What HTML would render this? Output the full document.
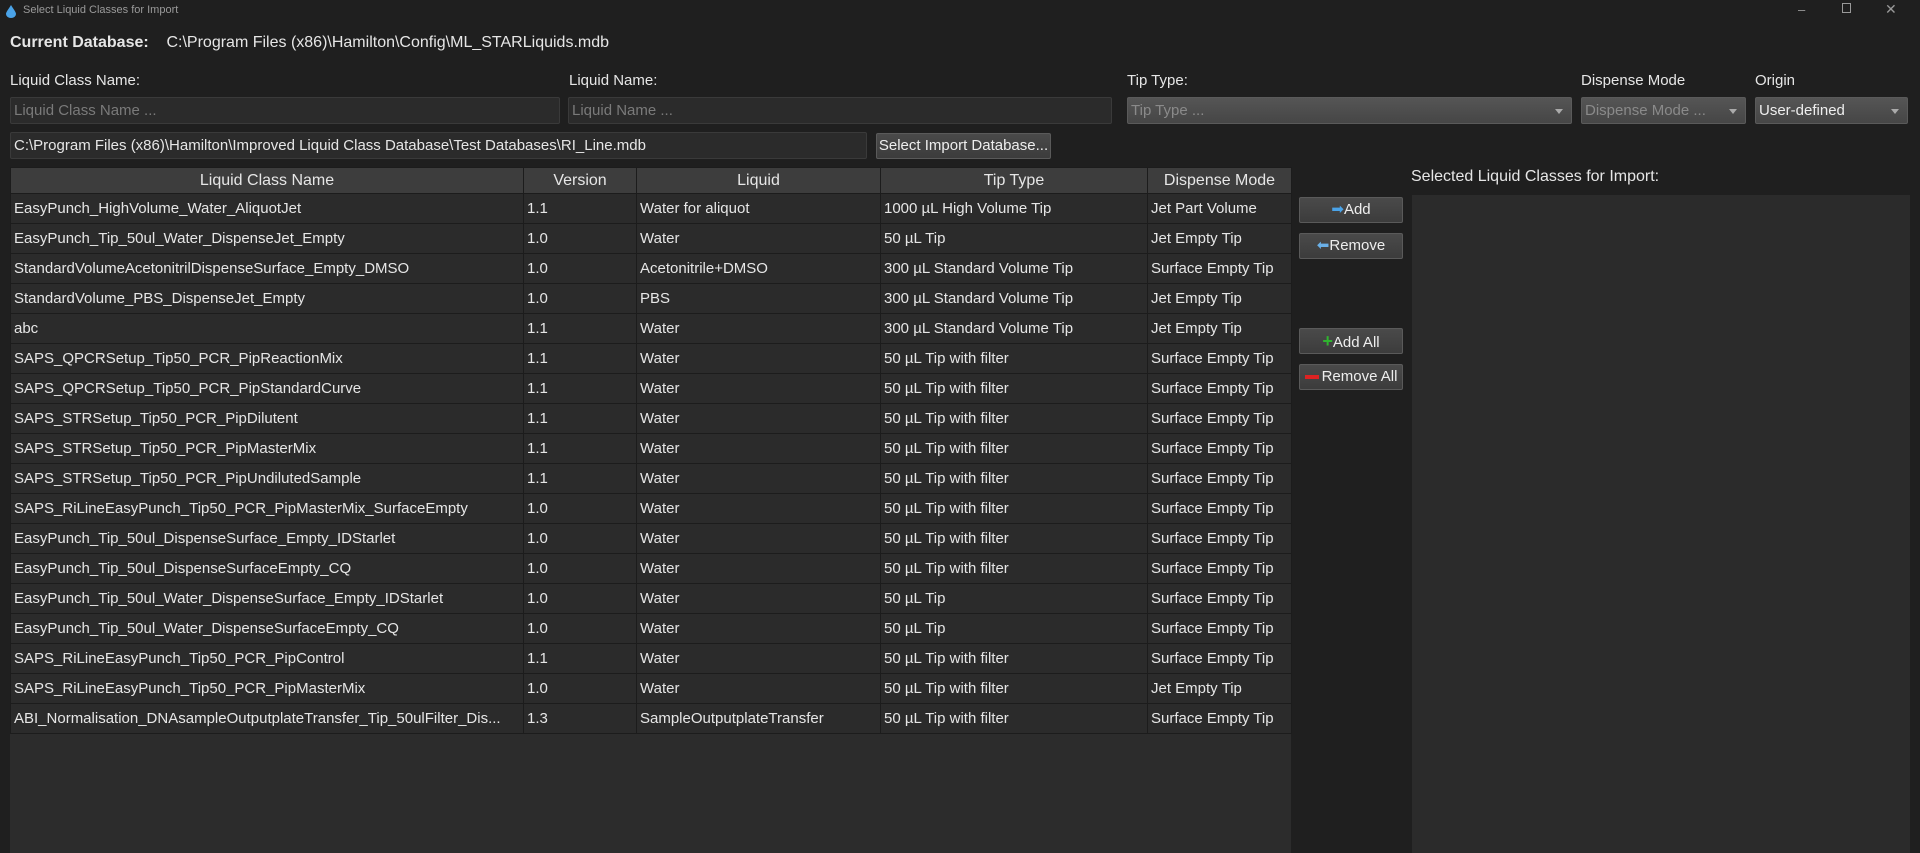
<!DOCTYPE html>
<html><head><meta charset="utf-8"><style>
*{box-sizing:border-box;margin:0;padding:0}
body{width:1920px;height:853px;background:#1f1f1f;color:#e6e6e6;font-family:"Liberation Sans",sans-serif;font-size:14px;position:relative;overflow:hidden}
.a{position:absolute;white-space:nowrap}
.inp{position:absolute;background:#2b2b2b;border:1px solid #3a3a3a;border-radius:2px;color:#7a7a7a;padding:5px 3px;font-size:15px;line-height:16px}
.cmb{position:absolute;background:linear-gradient(#555,#464646);border:1px solid #5a5a5a;border-radius:2px;color:#8a8a8a;padding:5px 3px;font-size:15px;line-height:16px}
.cmb:after{content:"";position:absolute;right:8px;top:11px;border:4px solid transparent;border-top:5px solid #aaa}
.btn{position:absolute;background:linear-gradient(#4a4a4a,#3c3c3c);border:1px solid #5a5a5a;border-radius:2px;color:#eee;text-align:center;font-size:15px;line-height:24px}
table{position:absolute;left:10px;top:167px;width:1281px;border-collapse:collapse;table-layout:fixed}
td,th{height:30px;border:1px solid #1c1c1c;padding:0 3px;font-weight:normal;white-space:nowrap;overflow:hidden;font-size:15px}
th{height:26px;background:#3d3d3d;font-size:16px}
td{background:#2b2b2b}
</style></head><body>
<div class="a" style="left:0;top:0;width:1920px;height:22px;background:#1f1f1f"></div>
<svg class="a" style="left:5px;top:4px" width="12" height="14"><path d="M6 1 C3 6 1 8 1 10 A5 4 0 0 0 11 10 C11 8 9 6 6 1Z" fill="#4aa3e8"/></svg>
<div class="a" style="left:23px;top:4px;font-size:11px;color:#9a9a9a">Select Liquid Classes for Import</div>
<div class="a" style="left:1798px;top:2px;color:#999;font-size:13px">–</div>
<div class="a" style="left:1842px;top:3px;width:9px;height:10px;border:1px solid #999"></div>
<div class="a" style="left:1885px;top:1px;color:#999;font-size:14px">✕</div>
<div class="a" style="left:10px;top:34px;font-size:16px"><b>Current Database:</b>&nbsp;&nbsp;&nbsp; C:\Program Files (x86)\Hamilton\Config\ML_STARLiquids.mdb</div>
<div class="a" style="left:10px;top:72px;font-size:15px">Liquid Class Name:</div>
<div class="a" style="left:569px;top:72px;font-size:15px">Liquid Name:</div>
<div class="a" style="left:1127px;top:72px;font-size:15px">Tip Type:</div>
<div class="a" style="left:1581px;top:72px;font-size:15px">Dispense Mode</div>
<div class="a" style="left:1755px;top:72px;font-size:15px">Origin</div>
<div class="inp" style="left:10px;top:97px;width:550px;height:27px">Liquid Class Name ...</div>
<div class="inp" style="left:568px;top:97px;width:544px;height:27px">Liquid Name ...</div>
<div class="cmb" style="left:1127px;top:97px;width:445px;height:27px">Tip Type ...</div>
<div class="cmb" style="left:1581px;top:97px;width:165px;height:27px">Dispense Mode ...</div>
<div class="cmb" style="left:1755px;top:97px;width:153px;height:27px;color:#eee">User-defined</div>
<div class="inp" style="left:10px;top:132px;width:857px;height:27px;color:#e6e6e6">C:\Program Files (x86)\Hamilton\Improved Liquid Class Database\Test Databases\RI_Line.mdb</div>
<div class="btn" style="left:876px;top:133px;width:175px;height:26px">Select Import Database...</div>
<div class="a" style="left:10px;top:193px;width:1281px;height:660px;background:#2c2c2c"></div>
<table>
<colgroup><col style="width:513px"><col style="width:113px"><col style="width:244px"><col style="width:267px"><col style="width:144px"></colgroup>
<tr><th>Liquid Class Name</th><th>Version</th><th>Liquid</th><th>Tip Type</th><th>Dispense Mode</th></tr>
<tr><td>EasyPunch_HighVolume_Water_AliquotJet</td><td>1.1</td><td>Water for aliquot</td><td>1000 µL High Volume Tip</td><td>Jet Part Volume</td></tr>
<tr><td>EasyPunch_Tip_50ul_Water_DispenseJet_Empty</td><td>1.0</td><td>Water</td><td>50 µL Tip</td><td>Jet Empty Tip</td></tr>
<tr><td>StandardVolumeAcetonitrilDispenseSurface_Empty_DMSO</td><td>1.0</td><td>Acetonitrile+DMSO</td><td>300 µL Standard Volume Tip</td><td>Surface Empty Tip</td></tr>
<tr><td>StandardVolume_PBS_DispenseJet_Empty</td><td>1.0</td><td>PBS</td><td>300 µL Standard Volume Tip</td><td>Jet Empty Tip</td></tr>
<tr><td>abc</td><td>1.1</td><td>Water</td><td>300 µL Standard Volume Tip</td><td>Jet Empty Tip</td></tr>
<tr><td>SAPS_QPCRSetup_Tip50_PCR_PipReactionMix</td><td>1.1</td><td>Water</td><td>50 µL Tip with filter</td><td>Surface Empty Tip</td></tr>
<tr><td>SAPS_QPCRSetup_Tip50_PCR_PipStandardCurve</td><td>1.1</td><td>Water</td><td>50 µL Tip with filter</td><td>Surface Empty Tip</td></tr>
<tr><td>SAPS_STRSetup_Tip50_PCR_PipDilutent</td><td>1.1</td><td>Water</td><td>50 µL Tip with filter</td><td>Surface Empty Tip</td></tr>
<tr><td>SAPS_STRSetup_Tip50_PCR_PipMasterMix</td><td>1.1</td><td>Water</td><td>50 µL Tip with filter</td><td>Surface Empty Tip</td></tr>
<tr><td>SAPS_STRSetup_Tip50_PCR_PipUndilutedSample</td><td>1.1</td><td>Water</td><td>50 µL Tip with filter</td><td>Surface Empty Tip</td></tr>
<tr><td>SAPS_RiLineEasyPunch_Tip50_PCR_PipMasterMix_SurfaceEmpty</td><td>1.0</td><td>Water</td><td>50 µL Tip with filter</td><td>Surface Empty Tip</td></tr>
<tr><td>EasyPunch_Tip_50ul_DispenseSurface_Empty_IDStarlet</td><td>1.0</td><td>Water</td><td>50 µL Tip with filter</td><td>Surface Empty Tip</td></tr>
<tr><td>EasyPunch_Tip_50ul_DispenseSurfaceEmpty_CQ</td><td>1.0</td><td>Water</td><td>50 µL Tip with filter</td><td>Surface Empty Tip</td></tr>
<tr><td>EasyPunch_Tip_50ul_Water_DispenseSurface_Empty_IDStarlet</td><td>1.0</td><td>Water</td><td>50 µL Tip</td><td>Surface Empty Tip</td></tr>
<tr><td>EasyPunch_Tip_50ul_Water_DispenseSurfaceEmpty_CQ</td><td>1.0</td><td>Water</td><td>50 µL Tip</td><td>Surface Empty Tip</td></tr>
<tr><td>SAPS_RiLineEasyPunch_Tip50_PCR_PipControl</td><td>1.1</td><td>Water</td><td>50 µL Tip with filter</td><td>Surface Empty Tip</td></tr>
<tr><td>SAPS_RiLineEasyPunch_Tip50_PCR_PipMasterMix</td><td>1.0</td><td>Water</td><td>50 µL Tip with filter</td><td>Jet Empty Tip</td></tr>
<tr><td>ABI_Normalisation_DNAsampleOutputplateTransfer_Tip_50ulFilter_Dis...</td><td>1.3</td><td>SampleOutputplateTransfer</td><td>50 µL Tip with filter</td><td>Surface Empty Tip</td></tr>
</table>
<div class="btn" style="left:1299px;top:197px;width:104px;height:26px"><span style="color:#4aa3e8">➡</span>Add</div>
<div class="btn" style="left:1299px;top:233px;width:104px;height:26px"><span style="color:#6ab0e8">⬅</span>Remove</div>
<div class="btn" style="left:1299px;top:328px;width:104px;height:26px"><span style="color:#2fb52f;font-weight:bold;font-size:18px">+</span>Add All</div>
<div class="btn" style="left:1299px;top:364px;width:104px;height:26px"><span style="display:inline-block;width:14px;height:4px;background:#d22;vertical-align:middle;margin-right:3px"></span>Remove All</div>
<div class="a" style="left:1411px;top:168px;font-size:16px">Selected Liquid Classes for Import:</div>
<div class="a" style="left:1412px;top:195px;width:498px;height:658px;background:#2b2b2b"></div>
</body></html>
